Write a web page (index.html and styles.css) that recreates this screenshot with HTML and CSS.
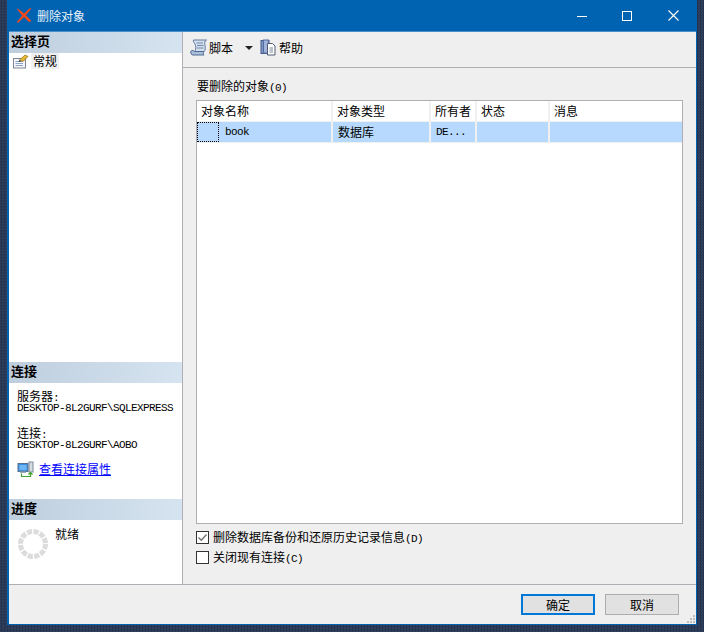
FILE: index.html
```html
<!DOCTYPE html>
<html lang="zh-CN">
<head>
<meta charset="utf-8">
<title>删除对象</title>
<link rel="stylesheet" href="styles.css">
</head>
<body>
<div class="window">
  <header class="titlebar">
    <svg class="app-icon" width="16" height="15" viewBox="0 0 16 15"><path d="M.5.500C3 1 6 3.500 8 5.500L13.500.500H15.500L9.800 7.200 15.500 13 13 14 8 9 2.500 14.500H.5L6.200 7.500C4.500 5.500 2.500 3 .5.500Z" fill="#f2481b"/></svg>
    <span class="title">删除对象</span>
    <div class="controls">
      <svg width="10" height="10" viewBox="0 0 10 10" class="ctl-min"><path d="M0 5.500H10" stroke="#fff"/></svg>
      <svg width="10" height="10" viewBox="0 0 10 10" class="ctl-max"><rect x=".5" y=".5" width="9" height="9" fill="none" stroke="#fff"/></svg>
      <svg width="11" height="11" viewBox="0 0 11 11" class="ctl-close"><path d="M.5.500L10.500 10.500M10.500.500L.5 10.500" stroke="#fff" stroke-width="1.100"/></svg>
    </div>
  </header>
  <div class="main">
    <aside class="sidebar">
      <section class="sec-pages">
        <h2 class="sec-head">选择页</h2>
        <div class="nav-item">
          <svg width="17" height="15" viewBox="0 0 17 15"><rect x="1.500" y="4.500" width="12" height="9.500" fill="#f4f6fa" stroke="#7f8894"/><path d="M3.500 7.500H11M3.500 9.500H11M3.500 11.500H11" stroke="#8fa5c4"/><path d="M7.500 6L13 1l3 1.500L11 7.500Z" fill="#e8b830" stroke="#8a6c14" stroke-width=".7"/><path d="M6.500 8L7.500 6l1.500 1.500Z" fill="#333"/></svg>
          <span class="nav-label">常规</span>
        </div>
      </section>
      <section class="sec-conn">
        <h2 class="sec-head">连接</h2>
        <div class="conn-body">
          <div class="conn-label">服务器<span class="lat">:</span></div>
          <div class="conn-value">DESKTOP-8L2GURF\SQLEXPRESS</div>
          <div class="conn-label conn-gap">连接<span class="lat">:</span></div>
          <div class="conn-value">DESKTOP-8L2GURF\AOBO</div>
          <div class="conn-link">
            <svg width="17" height="16" viewBox="0 0 17 16"><rect x="1" y="2.500" width="10" height="8" fill="#3f8fe0" stroke="#56708f"/><rect x="2.500" y="4" width="7" height="5" fill="#6db7f5"/><rect x="3" y="10.500" width="6" height="1.500" fill="#9aa7b5"/><rect x="12" y="1" width="4" height="10" fill="#d5dbe2" stroke="#7d8996"/><path d="M4.500 12.500V15.500H13.500V12M11.500 13.500L13.500 11.500 15.500 13.500" stroke="#3da32c" fill="none" stroke-width="1.200"/></svg>
            <a href="#" class="link">查看连接属性</a>
          </div>
        </div>
      </section>
      <section class="sec-prog">
        <h2 class="sec-head">进度</h2>
        <div class="prog-body">
          <svg class="spinner" width="30" height="30" viewBox="0 0 30 30"><circle cx="15" cy="15" r="12.500" fill="none" stroke="#dcdcdc" stroke-width="5" stroke-dasharray="5.200 1.350"/></svg>
          <span class="prog-text">就绪</span>
        </div>
      </section>
    </aside>
    <div class="content">
      <div class="toolbar">
        <svg width="18" height="17" viewBox="0 0 18 17"><path d="M3.500 1H16.500C14.500 2 14.500 4 15 6.500 15.500 9 15.500 11 14 12.500H4.500C6 11 6 9 5.500 6.500 5 4 2.500 2.500 3.500 1Z" fill="#d5e0ee" stroke="#5f7aa0"/><path d="M.8 13C.8 11.300 3 10.800 4.500 12.500H14C13 13.500 13 15 14 16H3C1.300 16 .8 14.500 .8 13Z" fill="#a9bed9" stroke="#4f6a92"/><path d="M6.500 4H13M7 6.500H13.500M7 9H13.500" stroke="#6f87aa"/></svg>
        <span class="tool-label">脚本</span>
        <span class="caret"></span>
        <svg class="help-icon" width="16" height="17" viewBox="0 0 16 17"><rect x="1" y="1.500" width="8" height="13" fill="#7f97c8" stroke="#44598a"/><rect x="3.500" y="1" width="5" height="13" fill="#a0b3da" stroke="#546c9c"/><path d="M7.500 4.500H12.500L15 7V16H7.500Z" fill="#fff" stroke="#4f5c72"/><path d="M9.500 9H13M9.500 11H13M9.500 13H13" stroke="#7d8898"/></svg>
        <span class="tool-label">帮助</span>
      </div>
      <div class="panel">
        <div class="panel-label">要删除的对象<span class="lat">(0)</span></div>
        <div class="grid">
          <div class="grid-row grid-head">
            <div class="cell">对象名称</div>
            <div class="cell">对象类型</div>
            <div class="cell">所有者</div>
            <div class="cell">状态</div>
            <div class="cell">消息</div>
          </div>
          <div class="grid-row grid-sel">
            <div class="cell cell-name"><span class="focus-box"></span><span class="mono">book</span></div>
            <div class="cell">数据库</div>
            <div class="cell"><span class="mono">DE...</span></div>
            <div class="cell"></div>
            <div class="cell"></div>
          </div>
        </div>
        <div class="checks">
          <div class="check">
            <svg class="box" width="13" height="13" viewBox="0 0 13 13"><rect x=".5" y=".5" width="12" height="12" fill="#fff" stroke="#333"/><path d="M2.500 6.500L5.300 9.300 10.500 3.500" fill="none" stroke="#6f6f6f" stroke-width="1.300"/></svg>
            <span>删除数据库备份和还原历史记录信息<span class="lat">(D)</span></span>
          </div>
          <div class="check">
            <svg class="box" width="13" height="13" viewBox="0 0 13 13"><rect x=".5" y=".5" width="12" height="12" fill="#fff" stroke="#333"/></svg>
            <span>关闭现有连接<span class="lat">(C)</span></span>
          </div>
        </div>
      </div>
    </div>
  </div>
  <footer class="footer">
    <button class="btn btn-default">确定</button>
    <button class="btn">取消</button>
    <svg class="grip" width="9" height="9" viewBox="0 0 9 9"><path d="M6 0h2v2H6zM3 3h2v2H3zM6 3h2v2H6zM0 6h2v2H0zM3 6h2v2H3zM6 6h2v2H6z" fill="#bdbdbd"/></svg>
  </footer>
</div>
</body>
</html>
```
FILE: styles.css
```css
* { box-sizing: border-box; }
html, body { margin: 0; height: 100%; }
body {
  width: 704px;
  height: 632px;
  overflow: hidden;
  padding-left: 7px;
  background-color: #2a3a57;
  background-image: conic-gradient(#25334e 25%, #30405f 0 50%, #25334e 0 75%, #30405f 0);
  background-size: 3px 3px;
  font-family: "Noto Sans CJK SC", "Liberation Sans", sans-serif;
  font-size: 12px;
  color: #000;
}
.window {
  width: 690px;
  height: 625px;
  display: flex;
  flex-direction: column;
  background: #efefef;
  border: 1px solid #0063b1;
  border-top: 0;
  border-left-width: 2px;
}
.titlebar {
  height: 32px;
  flex: none;
  display: flex;
  align-items: center;
  background: #0063b1;
  border-bottom: 1px solid #4d8fc6;
  padding-left: 7px;
}
.app-icon { flex: none; }
.title { margin-left: 5px; color: #e8f1fa; line-height: 16px; }
.controls { margin-left: auto; display: flex; align-items: center; }
.ctl-min { margin-right: 35px; }
.ctl-max { margin-right: 36px; }
.ctl-close { margin-right: 17px; }
.main { flex: 1; min-height: 0; display: flex; }
.sidebar {
  width: 174px;
  flex: none;
  display: flex;
  flex-direction: column;
  background: #fff;
  border-right: 1px solid #aeaeb4;
}
.sec-pages { flex: 1; }
.sec-conn { height: 137px; flex: none; }
.sec-prog { height: 85px; flex: none; }
.sec-head {
  margin: 0;
  height: 21px;
  padding-left: 2px;
  font-size: 13px;
  line-height: 18px;
  font-weight: 700;
  background: linear-gradient(to right, #bfcedd, #d6e4f1);
}
.nav-item { display: flex; align-items: center; height: 16px; padding-left: 3px; }
.nav-label { margin-left: 2px; padding: 0 2px; background: #f0f0f0; line-height: 16px; }
.conn-body { padding: 6px 0 0 8px; }
.conn-label { line-height: 14px; height: 14px; }
.conn-gap { margin-top: 12px; }
.conn-value {
  font-family: "Liberation Mono", monospace;
  font-size: 11px;
  letter-spacing: -.6px;
  line-height: 11px;
  height: 11px;
  white-space: nowrap;
}
.conn-link { display: flex; align-items: center; margin-top: 10px; }
.link { margin-left: 5px; color: #0000ff; line-height: 16px; }
.prog-body { display: flex; padding: 7px 0 0 9px; }
.spinner { margin-top: 2px; }
.prog-text { margin-left: 7px; line-height: 14px; }
.content { flex: 1; min-width: 0; display: flex; flex-direction: column; }
.toolbar {
  height: 36px;
  flex: none;
  display: flex;
  align-items: center;
  padding: 0 0 4px 7px;
  border-bottom: 1px solid #aeaeb4;
}
.tool-label { margin-left: 1px; line-height: 16px; }
.caret {
  width: 0;
  height: 0;
  margin-left: 12px;
  margin-right: 7px;
  border-left: 4px solid transparent;
  border-right: 4px solid transparent;
  border-top: 4px solid #222;
}
.help-icon { flex: none; margin-right: 2px; }
.panel { flex: 1; min-height: 0; display: flex; flex-direction: column; padding: 10px 13px 0 13px; }
.panel-label { height: 16px; line-height: 16px; margin-left: 1px; margin-bottom: 6px; }
.lat { font-family: "Liberation Mono", monospace; font-size: 11px; letter-spacing: -.6px; }
.grid {
  height: 424px;
  flex: none;
  background: #fff;
  border: 1px solid #aeaeb4;
}
.grid-row {
  display: grid;
  grid-template-columns: 136px 98px 46px 73px 1fr;
  height: 21px;
  border-bottom: 1px solid #f0f0f0;
}
.grid-sel { background: #b6d9fd; }
.cell {
  display: flex;
  align-items: center;
  padding-left: 4px;
  border-right: 2px solid #f0f0f0;
  line-height: 16px;
  white-space: nowrap;
}
.cell:last-child { border-right: 0; }
.grid-sel .cell { padding-left: 5px; }
.grid-sel .cell-name { padding-left: 0; }
.focus-box { width: 22px; height: 20px; border: 1px dotted #000; }
.mono { font-family: "Liberation Mono", monospace; font-size: 11px; letter-spacing: -.6px; }
.cell-name .mono { margin-left: 6px; }
.checks { display: flex; flex-direction: column; gap: 7px; margin-top: 7px; }
.check { display: flex; align-items: center; height: 13px; line-height: 16px; white-space: nowrap; }
.box { flex: none; margin-right: 4px; }
.footer {
  position: relative;
  height: 40px;
  flex: none;
  display: flex;
  justify-content: flex-end;
  align-items: flex-start;
  gap: 10px;
  padding: 9px 17px 0 0;
  border-top: 1px solid #aeaeb4;
}
.btn {
  width: 74px;
  height: 21px;
  padding: 0;
  background: #e1e1e1;
  border: 1px solid #adadad;
  font: inherit;
  line-height: 16px;
  color: #000;
}
.btn-default { border: 2px solid #0078d7; }
.grip { position: absolute; right: 0; bottom: 0; }
```
